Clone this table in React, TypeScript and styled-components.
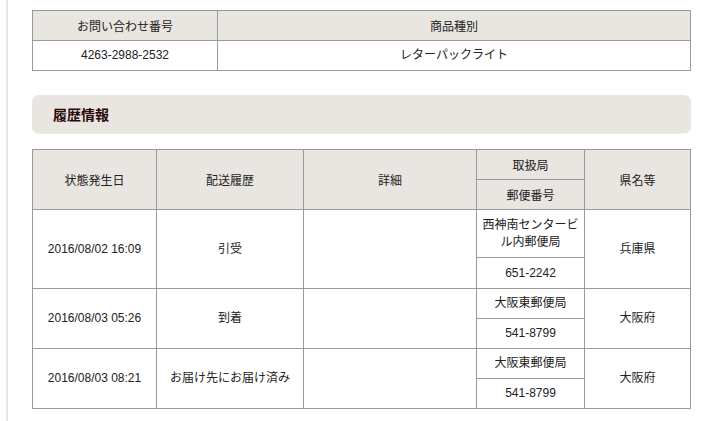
import { Fragment } from "react";
import styled, { createGlobalStyle } from "styled-components";

const GlobalStyle = createGlobalStyle`
	html, body {
		margin: 0;
		padding: 0;
		background: #fff;
	}
	body {
		font-family: "Liberation Sans", "Noto Sans CJK JP", sans-serif;
		font-size: 12px;
		color: #222;
	}
`

const Page = styled.div`
	margin-left: 6px;
	border-left: 2px solid #e6e6e6;
	padding: 10px 0 12px 24px;
	width: 659px;
	min-height: 399px;
`

const Table = styled.table`
	width: 659px;
	border-collapse: collapse;
	table-layout: fixed;
	border: 1px solid #9a9a9a;
`

const Th = styled.th<{ $h?: number }>`
	background: #e9e5e1;
	border: 1px solid #9a9a9a;
	font-weight: normal;
	text-align: center;
	padding: 0 4px;
	height: ${p => p.$h ?? 29}px;
`

const Td = styled.td<{ $h?: number }>`
	border: 1px solid #9a9a9a;
	text-align: center;
	padding: 0 4px;
	line-height: 17px;
	height: ${p => p.$h ?? 29}px;
`

const SectionTitle = styled.div`
	margin: 24px 0 16px;
	height: 38px;
	display: flex;
	align-items: center;
	padding-left: 21px;
	background: #e9e5e1;
	border-radius: 7px;
	font-size: 14px;
	font-weight: bold;
	color: #2a0808;
	box-shadow: 0 1px 1px #f1ede9;
`

type Row = { date: string; status: string; office: string; zip: string; pref: string; tall?: boolean }

const rows: Row[] = [
	{ date: "2016/08/02 16:09", status: "引受", office: "西神南センタービル内郵便局", zip: "651-2242", pref: "兵庫県", tall: true },
	{ date: "2016/08/03 05:26", status: "到着", office: "大阪東郵便局", zip: "541-8799", pref: "大阪府" },
	{ date: "2016/08/03 08:21", status: "お届け先にお届け済み", office: "大阪東郵便局", zip: "541-8799", pref: "大阪府" },
]

export default function App() {
	return (
		<>
			<GlobalStyle />
			<Page>
				<Table>
					<colgroup>
						<col style={{ width: 185 }} />
						<col />
					</colgroup>
					<thead>
						<tr>
							<Th>お問い合わせ番号</Th>
							<Th>商品種別</Th>
						</tr>
					</thead>
					<tbody>
						<tr>
							<Td>4263-2988-2532</Td>
							<Td>レターパックライト</Td>
						</tr>
					</tbody>
				</Table>

				<SectionTitle>履歴情報</SectionTitle>

				<Table>
					<colgroup>
						<col style={{ width: 124 }} />
						<col style={{ width: 147 }} />
						<col style={{ width: 173 }} />
						<col style={{ width: 108 }} />
						<col />
					</colgroup>
					<thead>
						<tr>
							<Th rowSpan={2}>状態発生日</Th>
							<Th rowSpan={2}>配送履歴</Th>
							<Th rowSpan={2}>詳細</Th>
							<Th>取扱局</Th>
							<Th rowSpan={2}>県名等</Th>
						</tr>
						<tr>
							<Th>郵便番号</Th>
						</tr>
					</thead>
					<tbody>
						{rows.map(r => (
							<Fragment key={r.date}>
								<tr>
									<Td rowSpan={2}>{r.date}</Td>
									<Td rowSpan={2}>{r.status}</Td>
									<Td rowSpan={2}></Td>
									<Td $h={r.tall ? 47 : 29}>{r.office}</Td>
									<Td rowSpan={2}>{r.pref}</Td>
								</tr>
								<tr>
									<Td $h={r.tall ? 30 : 29}>{r.zip}</Td>
								</tr>
							</Fragment>
						))}
					</tbody>
				</Table>
			</Page>
		</>
	);
}
